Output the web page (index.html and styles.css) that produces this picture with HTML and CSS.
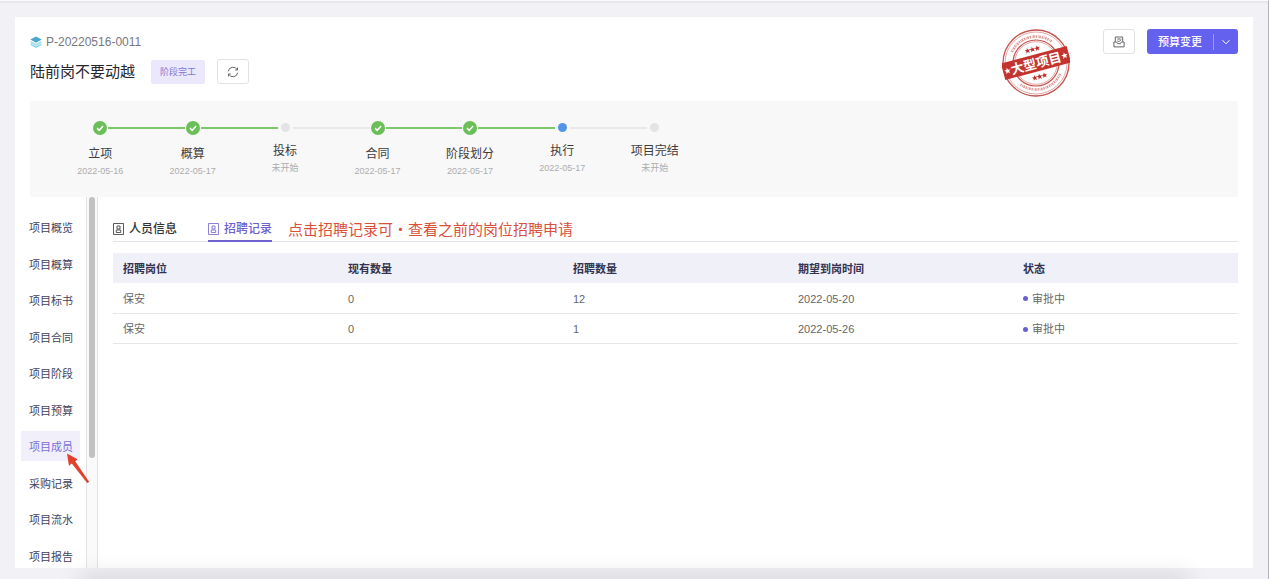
FILE: index.html
```html
<!DOCTYPE html>
<html lang="zh-CN">
<head>
<meta charset="utf-8">
<meta name="viewport" content="width=device-width, initial-scale=1">
<title>陆前岗不要动越</title>
<link rel="stylesheet" href="styles.css">
</head>
<body>
<div class="page">
  <div class="card">
    <header class="header">
      <div class="heading">
        <div class="code-row">
          <svg class="layers" viewBox="0 0 12 12" aria-hidden="true">
            <path d="M.6 7.800 6 10.200l5.400-2.400v1.400L6 11.900.6 9.200z" fill="#8fd6ea"/>
            <path d="M.6 5V7.300L6 9.900l5.400-2.600V5L6 7.800z" fill="#a5e0ef"/>
            <path d="M6 .5 11.700 3.500 6 6.700.3 3.500z" fill="#4ba6cf"/>
          </svg>
          <span>P-20220516-0011</span>
        </div>
        <div class="title-row">
          <h1 class="title">陆前岗不要动越</h1>
          <span class="tag">阶段完工</span>
          <button class="icon-button" type="button" aria-label="刷新">
            <svg class="icon" viewBox="0 0 12 12" aria-hidden="true">
              <path d="M1.300 5.300A4.800 4.800 0 0 1 10.300 3.800M10.700 6.700A4.800 4.800 0 0 1 1.700 8.200M10.500 1.600v2.400H8.200M1.500 10.400V8h2.300"/>
            </svg>
          </button>
        </div>
      </div>
      <svg class="stamp" viewBox="0 0 68 68" role="img" aria-label="大型项目">
        <g fill="none" stroke="#c4524e">
          <circle cx="34" cy="34" r="33" stroke-width="1.300"/>
          <circle cx="34" cy="34" r="31" stroke-width=".5"/>
          <circle cx="34" cy="34" r="23" stroke-width="1.200"/>
          <circle cx="34" cy="34" r="21.300" stroke-width=".5"/>
          <g transform="rotate(-15 34 34)" stroke-width="2.600" opacity=".6">
            <path d="M13.500 17.200A26.500 26.500 0 0 1 54.500 17.200" stroke-dasharray="1.300 .8 .7 .7 1.600 .9"/>
            <path d="M13.500 50.800A26.500 26.500 0 0 0 54.500 50.800" stroke-dasharray="1.300 .8 .7 .7 1.600 .9"/>
          </g>
        </g>
        <g transform="rotate(-15 34 34)" fill="#b9302c">
          <path d="M0 25.500h68v17H0z" fill="#c4342f"/>
          <path id="star" d="m34 17.200.8 1.900 2 .1-1.500 1.300.5 2-1.800-1.100-1.800 1.100.5-2-1.500-1.300 2-.1z"/>
          <use href="#star" x="-5"/><use href="#star" x="5"/>
          <use href="#star" y="28"/><use href="#star" x="-5" y="28"/><use href="#star" x="5" y="28"/>
          <g fill="#fff">
            <path id="band-star" d="m4.500 31 .9 2.200 2.300.1-1.800 1.500.6 2.300-2-1.300-2 1.300.6-2.300-1.800-1.500 2.300-.1z"/>
            <use href="#band-star" x="59"/>
            <text class="stamp-text" x="34" y="39" text-anchor="middle">大型项目</text>
          </g>
        </g>
      </svg>
      <div class="actions">
        <button class="icon-button" type="button" aria-label="归档">
          <svg class="icon" viewBox="0 0 12 12" aria-hidden="true">
            <path d="M2.300 5.800V1h7.400v4.800M.9 10.900V6h2.700l1 1.700h2.800l1-1.700h2.700v4.900zM4.300 3h3.400M4.300 5l2 .5 2-2"/>
          </svg>
        </button>
        <div class="split">
          <button class="split-main" type="button">预算变更</button>
          <button class="split-more" type="button" aria-label="更多">
            <svg class="chevron" viewBox="0 0 10 10" aria-hidden="true"><path d="m1.500 3.200 3.500 3.600 3.500-3.600"/></svg>
          </button>
        </div>
      </div>
    </header>

    <ol class="steps">
      <li class="step done">
        <div class="rail"><i class="line none"></i><svg class="marker" viewBox="0 0 14 14" aria-hidden="true"><path d="m4 7.100 2.200 2.200 3.900-4.200"/></svg><i class="line green"></i></div>
        <span class="step-name">立项</span><span class="step-note">2022-05-16</span>
      </li>
      <li class="step done">
        <div class="rail"><i class="line green"></i><svg class="marker" viewBox="0 0 14 14" aria-hidden="true"><path d="m4 7.100 2.200 2.200 3.900-4.200"/></svg><i class="line green"></i></div>
        <span class="step-name">概算</span><span class="step-note">2022-05-17</span>
      </li>
      <li class="step">
        <div class="rail"><i class="line green"></i><i class="dot"></i><i class="line"></i></div>
        <span class="step-name">投标</span><span class="step-note">未开始</span>
      </li>
      <li class="step done">
        <div class="rail"><i class="line"></i><svg class="marker" viewBox="0 0 14 14" aria-hidden="true"><path d="m4 7.100 2.200 2.200 3.900-4.200"/></svg><i class="line green"></i></div>
        <span class="step-name">合同</span><span class="step-note">2022-05-17</span>
      </li>
      <li class="step done">
        <div class="rail"><i class="line green"></i><svg class="marker" viewBox="0 0 14 14" aria-hidden="true"><path d="m4 7.100 2.200 2.200 3.900-4.200"/></svg><i class="line green"></i></div>
        <span class="step-name">阶段划分</span><span class="step-note">2022-05-17</span>
      </li>
      <li class="step">
        <div class="rail"><i class="line green"></i><i class="dot current"></i><i class="line"></i></div>
        <span class="step-name">执行</span><span class="step-note">2022-05-17</span>
      </li>
      <li class="step">
        <div class="rail"><i class="line"></i><i class="dot"></i><i class="line none"></i></div>
        <span class="step-name">项目完结</span><span class="step-note">未开始</span>
      </li>
    </ol>

    <div class="body">
      <nav class="side">
        <ul class="menu">
          <li><a class="menu-link" href="#">项目概览</a></li>
          <li><a class="menu-link" href="#">项目概算</a></li>
          <li><a class="menu-link" href="#">项目标书</a></li>
          <li><a class="menu-link" href="#">项目合同</a></li>
          <li><a class="menu-link" href="#">项目阶段</a></li>
          <li><a class="menu-link" href="#">项目预算</a></li>
          <li class="active"><a class="menu-link" href="#">项目成员</a>
            <svg class="arrow" viewBox="0 0 24 32" aria-hidden="true"><path d="M1 .5 11.500 6.200 9.200 8.300 23.200 29 21.200 30 5.800 10.600 3 12.800z"/></svg>
          </li>
          <li><a class="menu-link" href="#">采购记录</a></li>
          <li><a class="menu-link" href="#">项目流水</a></li>
          <li><a class="menu-link" href="#">项目报告</a></li>
        </ul>
        <div class="track"><div class="thumb"></div></div>
      </nav>
      <main class="main">
        <div class="tabs">
          <button class="tab" type="button">
            <svg class="badge" viewBox="0 0 11 12" aria-hidden="true"><path d="M.5.5h10v11H.5zM3.300 9.500V7h4.400v2.500zM4 3h3v3H4z"/></svg>人员信息
          </button>
          <button class="tab selected" type="button">
            <svg class="badge" viewBox="0 0 11 12" aria-hidden="true"><path d="M.5.5h10v11H.5zM3.300 9.500V7h4.400v2.500zM4 3h3v3H4z"/></svg>招聘记录
          </button>
          <span class="hint">点击招聘记录可·查看之前的岗位招聘申请</span>
        </div>
        <table class="table">
          <thead>
            <tr><th>招聘岗位</th><th>现有数量</th><th>招聘数量</th><th>期望到岗时间</th><th>状态</th></tr>
          </thead>
          <tbody>
            <tr><td>保安</td><td>0</td><td>12</td><td>2022-05-20</td><td><span class="status">审批中</span></td></tr>
            <tr><td>保安</td><td>0</td><td>1</td><td>2022-05-26</td><td><span class="status">审批中</span></td></tr>
          </tbody>
        </table>
      </main>
    </div>
  </div>
</div>
</body>
</html>
```
FILE: styles.css
```css
* { box-sizing: border-box; }

body {
  margin: 0;
  background: #f1f1f6;
  color: #333;
  font: 11px/16px "Liberation Sans", "Noto Sans CJK SC", sans-serif;
}

button {
  margin: 0;
  padding: 0;
  border: 0;
  background: none;
  font: inherit;
  cursor: pointer;
}

ul, ol { margin: 0; padding: 0; list-style: none; }

.page {
  display: flex;
  flex-direction: column;
  height: 100vh;
  padding: 16px 15px 11px;
  border-top: 1px solid #fafafc;
  border-right: 1px solid #b4b4ba;
  box-shadow: inset 0 2px #e8e8ec;
}

/* soft shade rising from the lower edge of the window */
.page::after {
  content: "";
  position: fixed;
  top: 100%;
  left: 80px;
  right: 80px;
  height: 20px;
  box-shadow: 0 -4px 24px rgba(0, 0, 0, .12);
}

.card {
  display: flex;
  flex: 1;
  flex-direction: column;
  min-height: 0;
  background: #fff;
}

.header {
  display: flex;
  align-items: flex-start;
  padding: 12px 15px 4px;
}

.heading { flex: 1; }

.code-row {
  display: flex;
  align-items: center;
  gap: 4px;
  height: 25px;
  color: #77777f;
  font-size: 12px;
}

.layers { width: 12px; height: 12px; }

.title-row {
  display: flex;
  align-items: center;
  height: 25px;
  margin-top: 5px;
}

.title {
  margin: 0 16px 0 0;
  color: #26262e;
  font-size: 15px;
  font-weight: 400;
  line-height: 25px;
}

.tag {
  width: 54px;
  margin-right: 12px;
  border-radius: 2px;
  background: #ebe8fd;
  color: #8577d2;
  font-size: 9px;
  line-height: 24px;
  text-align: center;
}

.icon-button {
  display: flex;
  align-items: center;
  justify-content: center;
  width: 32px;
  height: 25px;
  border: 1px solid #e2e2e6;
  border-radius: 3px;
  background: #fff;
}

.icon {
  width: 12px;
  height: 12px;
  fill: none;
  stroke: #66666c;
  stroke-width: 1;
}

.stamp { width: 68px; height: 68px; margin-right: 33px; }

.stamp-text {
  font-family: "Liberation Serif", "Noto Sans CJK SC", serif;
  font-size: 13px;
  font-weight: 700;
}

.actions { display: flex; gap: 12px; }

.split {
  display: flex;
  align-items: center;
  width: 91px;
  height: 25px;
  border-radius: 3px;
  background: #6461ef;
  color: #fff;
}

.split-main { flex: 1; color: #fff; font-weight: 500; }

.split-more {
  display: flex;
  align-items: center;
  justify-content: center;
  width: 25px;
  height: 16px;
  border-left: 1px solid #9d9bf5;
}

.chevron { width: 10px; height: 10px; fill: none; stroke: #fff; }

.steps {
  display: grid;
  grid-template-columns: repeat(7, 1fr);
  height: 96px;
  margin: 0 15px;
  padding: 20px 537px 0 24px;
  background: #f8f8f8;
}

.step {
  display: flex;
  flex-direction: column;
  align-items: center;
}

.rail {
  display: flex;
  align-items: center;
  align-self: stretch;
  height: 9px;
  margin: 2px 0 10px;
}

.done .rail { height: 14px; margin-top: 0; }

.line { flex: 1; height: 2px; background: #e8e8e9; }
.line.green { background: #7cc86a; }
.line.none { background: none; }

.marker {
  width: 14px;
  height: 14px;
  margin: 0 1px;
  border-radius: 50%;
  background: #6abf57;
  fill: none;
  stroke: #fff;
  stroke-width: 1.5;
}

.dot {
  width: 9px;
  height: 9px;
  margin: 0 3px;
  border-radius: 50%;
  background: #e4e4e6;
}

.dot.current { background: #5494e8; }

.step-name {
  color: #3c3c3c;
  font-size: 12px;
  line-height: 18px;
  white-space: nowrap;
}

.step-note {
  color: #acacae;
  font-size: 9px;
  line-height: 16px;
}

.body { display: flex; flex: 1; min-height: 0; }

.side {
  display: flex;
  flex: none;
  overflow: hidden;
  padding-left: 6px;
}

.menu { width: 65px; padding-top: 15px; }
.menu li { position: relative; width: 59px; height: 30px; margin-bottom: 7px; }
.menu li:nth-child(even) { margin-bottom: 6px; }

.menu-link {
  display: block;
  height: 30px;
  padding-left: 8px;
  color: #43435c;
  line-height: 32px;
  text-decoration: none;
}

.active .menu-link { background: #f0effa; color: #7a6fd6; }

/* pointer laid over the selected entry */
.arrow {
  position: absolute;
  top: 22px;
  left: 45px;
  z-index: 1;
  width: 24px;
  height: 32px;
  fill: #e2402c;
}

.track {
  width: 12px;
  padding: 0 3px 0 2px;
  border: solid #e3e3e3;
  border-width: 0 1px;
  background: #fafafa;
}

.thumb { width: 6px; height: 261px; border-radius: 3px; background: #c1c1c1; }

.main { flex: 1; padding: 18px 15px 0; }

.tabs {
  display: flex;
  height: 27px;
  border-bottom: 1px solid #e3e3ea;
}

.tab {
  display: flex;
  align-items: center;
  gap: 5px;
  height: 27px;
  margin-right: 31px;
  padding-top: 2px;
  border-bottom: 2px solid transparent;
  color: #333;
  font-size: 12px;
  font-weight: 500;
}

.tab.selected {
  margin-right: 16px;
  border-bottom-color: #6f62cf;
  color: #6f62cf;
}

.badge { width: 11px; height: 12px; fill: none; stroke: currentColor; stroke-width: .8; }

.hint {
  color: #d9503c;
  font-family: "Noto Sans CJK SC", sans-serif;
  font-size: 15px;
  line-height: 28px;
  white-space: nowrap;
}

.table {
  width: 100%;
  margin-top: 11px;
  border-collapse: collapse;
  table-layout: fixed;
}

.table th, .table td {
  height: 30px;
  padding: 2px 10px 0;
  text-align: left;
}

.table th { background: #f0f1f8; color: #33334f; font-weight: 700; }
.table td { border-bottom: 1px solid #e6e6ea; color: #666; }

.status { display: flex; align-items: center; gap: 4px; }

.status::before {
  content: "";
  width: 5px;
  height: 5px;
  border-radius: 50%;
  background: #6a5fd0;
}
```
